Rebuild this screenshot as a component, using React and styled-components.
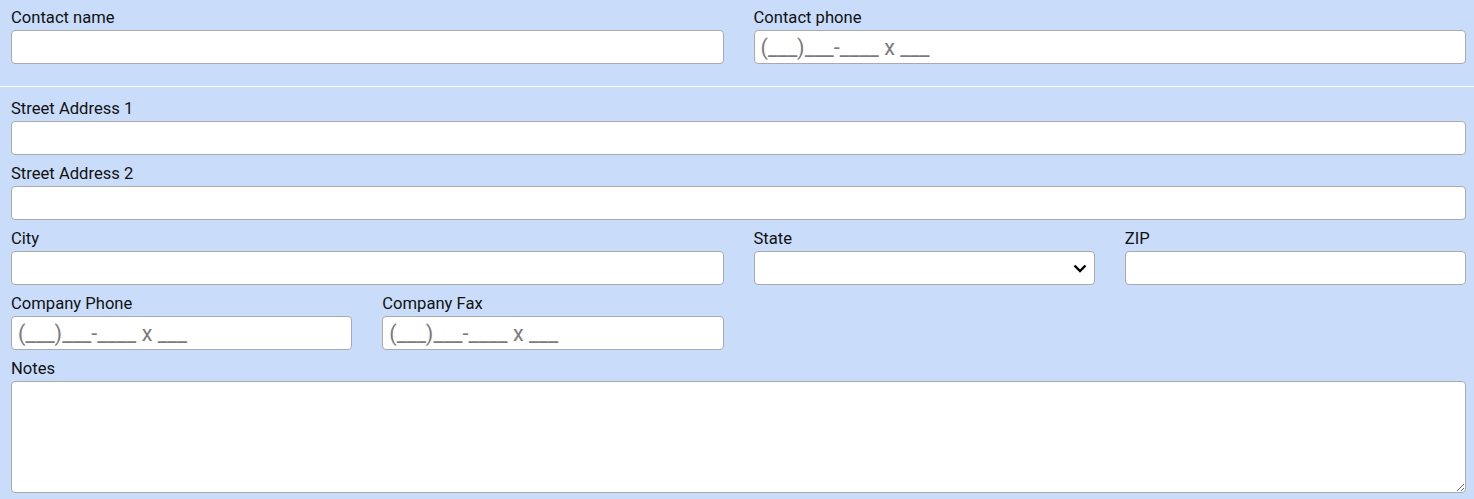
import styled, { createGlobalStyle } from "styled-components";

const GlobalStyle = createGlobalStyle`
  html, body {
    margin: 0;
    padding: 0;
    background: #c9ddfb;
    font-family: Roboto, "Liberation Sans", Arial, sans-serif;
  }
  * {
    box-sizing: border-box;
  }
`;

const chevron =
  "url(\"data:image/svg+xml;utf8,<svg xmlns='http://www.w3.org/2000/svg' width='14' height='9' viewBox='0 0 14 9'><path d='M1.5 1.5 L7 7 L12.5 1.5' fill='none' stroke='black' stroke-width='2.4'/></svg>\")";

const Form = styled.form`
  width: 1474px;
  background: #c9ddfb;
  color: #111;
`;

const Section = styled.div`
  display: grid;
  grid-template-columns: repeat(4, 1fr);
  column-gap: 30px;
  row-gap: 9px;
  padding: ${(p) => p.$pad || "8px 8px 6px 11px"};
  border-bottom: ${(p) => (p.$divider ? "1px solid #ffffff" : "none")};
`;

const Field = styled.div`
  display: flex;
  flex-direction: column;
  grid-column: span ${(p) => p.$span || 1};
`;

const Label = styled.label`
  font-size: 16.6px;
  line-height: 20px;
  margin-bottom: 2px;
`;

const Input = styled.input`
  height: 34px;
  width: 100%;
  border: 1px solid #aaaaaa;
  border-radius: 4px;
  background: #fff;
  padding: 0 6px;
  font-family: Roboto, "Liberation Sans", Arial, sans-serif;
  font-size: 21.6px;
  color: #777;
  outline: none;

  &::placeholder {
    color: #7b7b7b;
  }
`;

const Select = styled.select`
  appearance: none;
  -webkit-appearance: none;
  height: 34px;
  width: 100%;
  border: 1px solid #aaaaaa;
  border-radius: 4px;
  background: #fff ${chevron} no-repeat right 7px center;
  background-size: 14px 9px;
  font-family: Roboto, "Liberation Sans", Arial, sans-serif;
  font-size: 16px;
  color: #111;
  outline: none;
`;

const TextArea = styled.textarea`
  height: 112px;
  width: 100%;
  border: 1px solid #aaaaaa;
  border-radius: 4px;
  background: #fff;
  font-family: Roboto, "Liberation Sans", Arial, sans-serif;
  font-size: 16px;
  outline: none;
  display: block;
`;

const PHONE = "(___)___-____ x ___";

export default function App() {
  return (
    <>
      <GlobalStyle />
      <Form>
        <Section $divider $pad="8px 8px 22px 11px">
          <Field $span={2}>
            <Label>Contact name</Label>
            <Input type="text" />
          </Field>
          <Field $span={2}>
            <Label>Contact phone</Label>
            <Input type="text" placeholder={PHONE} />
          </Field>
        </Section>
        <Section $pad="12px 8px 6px 11px">
          <Field $span={4}>
            <Label>Street Address 1</Label>
            <Input type="text" />
          </Field>
          <Field $span={4}>
            <Label>Street Address 2</Label>
            <Input type="text" />
          </Field>
          <Field $span={2}>
            <Label>City</Label>
            <Input type="text" />
          </Field>
          <Field>
            <Label>State</Label>
            <Select defaultValue="">
              <option value=""></option>
            </Select>
          </Field>
          <Field>
            <Label>ZIP</Label>
            <Input type="text" />
          </Field>
          <Field>
            <Label>Company Phone</Label>
            <Input type="text" placeholder={PHONE} />
          </Field>
          <Field>
            <Label>Company Fax</Label>
            <Input type="text" placeholder={PHONE} />
          </Field>
          <Field $span={2} />
          <Field $span={4}>
            <Label>Notes</Label>
            <TextArea />
          </Field>
        </Section>
      </Form>
    </>
  );
}
